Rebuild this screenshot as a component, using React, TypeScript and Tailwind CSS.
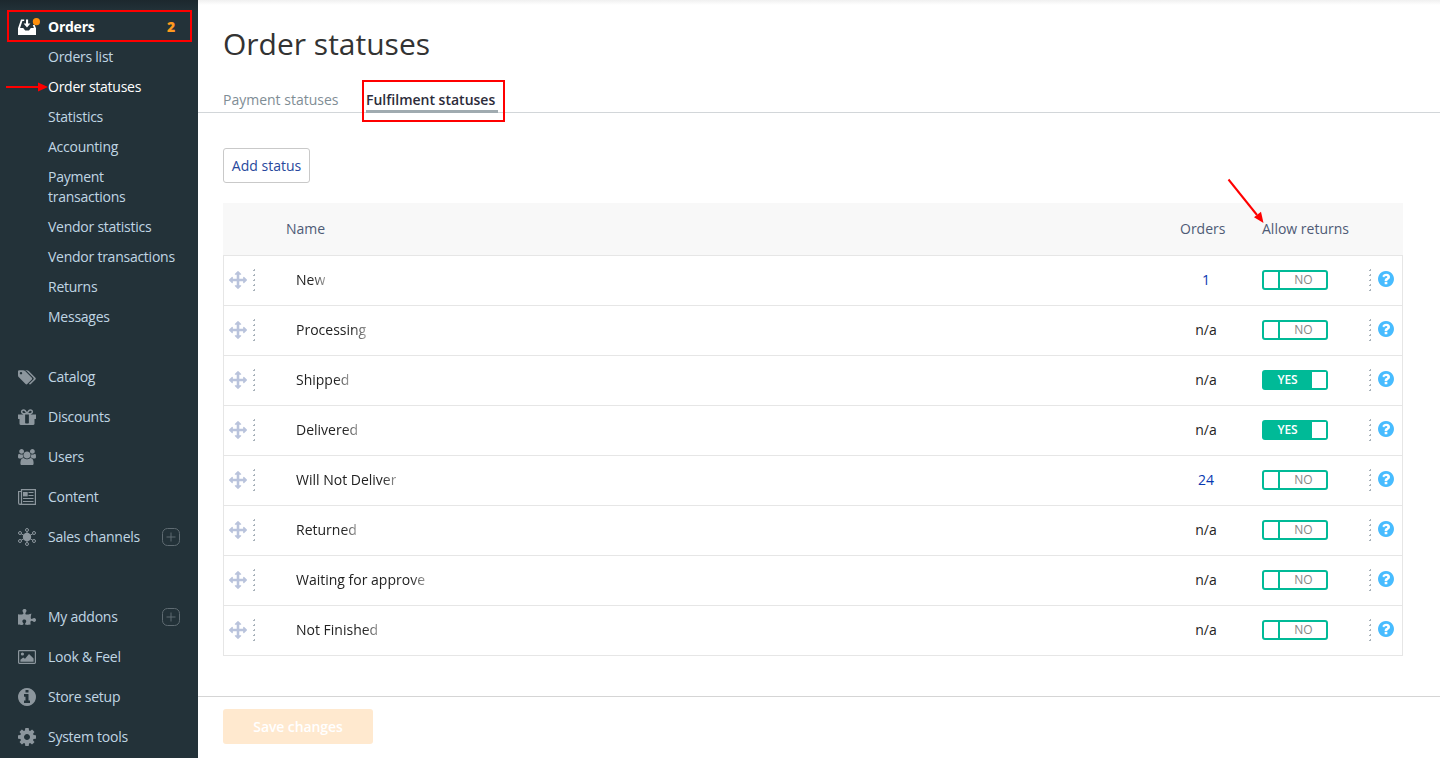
import React from "react";
import { FaPuzzlePiece } from "react-icons/fa";

type GlyphProps = { viewBox: string; w: number; h: number; d: string; className?: string };

function Glyph({ viewBox, w, h, d, className }: GlyphProps) {
  return (
    <svg width={w} height={h} viewBox={viewBox} fill="currentColor" className={className}>
      <path d={d} />
    </svg>
  );
}

const TAGS =
  "M448 448q0-53-37.5-90.5T320 320t-90.5 37.5T192 448t37.5 90.5T320 576t90.5-37.5T448 448zm1067 576q0 53-37 90l-491 492q-39 37-91 37-53 0-90-37L91 890q-38-37-64.5-101T0 672V256q0-52 38-90t90-38h416q53 0 117 26.5T763 219l715 714q37 39 37 91zm384 0q0 53-37 90l-491 492q-39 37-91 37-36 0-59-14t-53-45l470-470q37-37 37-90 0-52-37-91L923 219q-38-38-102-64.5T704 128h224q53 0 117 26.5t102 64.5l715 714q37 39 37 91z";
const GIFT =
  "M928 1356V640H608v716q0 25 18 38.5t46 13.5h192q28 0 46-13.5t18-38.5zM472 512h195L541 351q-26-31-69-31-40 0-68 28t-28 68 28 68 68 28zm688-96q0-40-28-68t-68-28q-43 0-69 31L870 512h194q40 0 68-28t28-68zm376 256v320q0 14-9 23t-23 9h-96v416q0 40-28 68t-68 28H224q-40 0-68-28t-28-68v-416H32q-14 0-23-9t-9-23V672q0-14 9-23t23-9h440q-93 0-158.5-65.5T248 416t65.5-158.5T472 192q107 0 168 77l128 165 128-165q61-77 168-77 93 0 158.5 65.5T1288 416t-65.5 158.5T1064 640h440q14 0 23 9t9 23z";
const USERS =
  "M593 896q-162 5-265 128H194q-82 0-138-40.5T0 865q0-353 124-353 6 0 43.5 21t97.5 42.5T384 597q67 0 133-23-5 37-5 66 0 139 81 256zm1071 637q0 120-73 189.5t-194 69.5H523q-121 0-194-69.5T256 1533q0-53 3.5-103.5t14-109T300 1212t43-97.5 62-81 85.5-53.5T602 960q10 0 43 21.5t73 48 107 48 135 21.5 135-21.5 107-48 73-48 43-21.5q61 0 111.5 20t85.5 53.5 62 81 43 97.5 26.5 108.5 14 109 3.5 103.5zM640 256q0 106-75 181t-181 75-181-75-75-181 75-181T384 0t181 75 75 181zm704 384q0 159-112.5 271.5T960 1024 688.5 911.5 576 640t112.5-271.5T960 256t271.5 112.5T1344 640zm576 225q0 78-56 118.5t-138 40.5h-134q-103-123-265-128 81-117 81-256 0-29-5-66 66 23 133 23 59 0 119-21.5t97.5-42.5 43.5-21q124 0 124 353zm-128-609q0 106-75 181t-181 75-181-75-75-181 75-181 181-75 181 75 75 181z";
const INFO =
  "M1024 1376v-160q0-14-9-23t-23-9h-96V672q0-14-9-23t-23-9H544q-14 0-23 9t-9 23v160q0 14 9 23t23 9h96v320h-96q-14 0-23 9t-9 23v160q0 14 9 23t23 9h448q14 0 23-9t9-23zM896 480V320q0-14-9-23t-23-9H672q-14 0-23 9t-9 23v160q0 14 9 23t23 9h192q14 0 23-9t9-23zm640 416q0 209-103 385.5T1153.5 1561 768 1664 382.5 1561 103 1281.5 0 896t103-385.5T382.5 231 768 128t385.5 103T1433 510.5 1536 896z";
const COG =
  "M1024 896q0-106-75-181t-181-75-181 75-75 181 75 181 181 75 181-75 75-181zm512-109v222q0 12-8 23t-20 13l-185 28q-19 54-39 91 35 50 107 138 10 12 10 25t-9 23q-27 37-99 108t-94 71q-12 0-26-9l-138-108q-44 23-91 38-16 136-29 186-7 28-36 28H657q-14 0-24.5-8.5T621 1634l-28-184q-49-16-90-37l-141 107q-10 9-25 9-14 0-25-11-126-114-165-168-7-10-7-23 0-12 8-23 15-21 51-66.5t54-70.5q-27-50-41-99L29 1041q-13-2-21-12.5T0 1005V783q0-12 8-23t19-13l186-28q14-46 39-92-40-57-107-138-10-12-10-24 0-10 9-23 26-36 98.5-107.5T337 263q13 0 26 10l138 107q44-23 91-38 16-136 29-186 7-28 36-28h222q14 0 24.5 8.5T915 158l28 184q49 16 90 37l142-107q9-9 24-9 13 0 25 10 129 119 165 170 7 8 7 22 0 12-8 23-15 21-51 66.5t-54 70.5q26 50 41 98l183 28q13 2 21 12.5t8 23.5z";
const ARROWS =
  "M1792 896q0 26-19 45l-256 256q-19 19-45 19t-45-19-19-45v-128h-384v384h128q26 0 45 19t19 45-19 45l-256 256q-19 19-45 19t-45-19l-256-256q-19-19-19-45t19-45 45-19h128v-384H384v128q0 26-19 45t-45 19-45-19L19 941Q0 922 0 896t19-45l256-256q19-19 45-19t45 19 19 45v128h384V384H640q-26 0-45-19t-19-45 19-45L851 19q19-19 45-19t45 19l256 256q19 19 19 45t-19 45-45 19h-128v384h384V640q0-26 19-45t45-19 45 19l256 256q19 19 19 45z";
const QUESTION =
  "M896 1376v-192q0-14-9-23t-23-9H672q-14 0-23 9t-9 23v192q0 14 9 23t23 9h192q14 0 23-9t9-23zm256-672q0-88-55.5-163T958 425t-170-41q-243 0-371 213-15 24 8 42l132 100q7 6 19 6 16 0 25-12 53-68 86-92 34-24 86-24 48 0 85.5 26t37.5 59q0 38-20 61t-68 45q-63 28-115.5 86.5T640 1020v36q0 14 9 23t23 9h192q14 0 23-9t9-23q0-19 21.5-49.5T972 957q32-18 49-28.5t46-35 44.5-48 28-60.5 12.5-81zm384 192q0 209-103 385.5T1153.5 1561 768 1664 382.5 1561 103 1281.5 0 896t103-385.5T382.5 231 768 128t385.5 103T1433 510.5 1536 896z";

function InboxIcon() {
  return (
    <svg width="22" height="18" viewBox="0 0 22 18" fill="#fff">
      <path d="M0 10H5.2L7.2 12.6H11L12.8 10H18V17H0Z" />
      <path d="M0 10.2 3 1.4H6.2V3H4.4L2 10.2ZM18 10.2 16.6 7H14.8L16 10.2Z" />
      <path d="M8 1.5H10.1V5.6H12.4L9 9.4 5.6 5.6H8Z" />
      <circle cx="18.4" cy="3.7" r="3.6" fill="#ff8f0a" />
    </svg>
  );
}

function NewsIcon() {
  return (
    <svg width="18" height="16" viewBox="0 0 18 16" fill="none" stroke="currentColor">
      <path d="M3.5 13.5V.6H17.4V15.4H2A1.4 1.4 0 0 1 .6 14V2.5H3.5M3.5 13.5A1.5 1.5 0 0 1 2 15.3" strokeWidth="1.2" />
      <path d="M10.5 3.5H15.5M10.5 6.5H15.5M5 9.5H15.5M5 12.5H15.5" />
      <path d="M5 3H9.7V7.4H5Z" fill="currentColor" stroke="none" />
    </svg>
  );
}

function HubIcon() {
  return (
    <svg width="18" height="18" viewBox="0 0 18 18" fill="none" stroke="currentColor" strokeWidth="1">
      <circle cx="9" cy="9" r="4.2" fill="currentColor" stroke="none" />
      <path d="M9 3.5V14.5M3.2 5.8 14.8 12.2M14.8 5.8 3.2 12.2" />
      <circle cx="9" cy="2" r="1.5" />
      <circle cx="9" cy="16" r="1.5" />
      <circle cx="2" cy="5" r="1.5" />
      <circle cx="16" cy="5" r="1.5" />
      <circle cx="2" cy="13" r="1.5" />
      <circle cx="16" cy="13" r="1.5" />
    </svg>
  );
}

function PictureIcon() {
  return (
    <svg width="18" height="14" viewBox="0 0 18 14">
      <rect x=".6" y=".6" width="16.8" height="12.8" rx=".8" fill="none" stroke="currentColor" strokeWidth="1.2" />
      <circle cx="4.4" cy="4" r="1.6" fill="currentColor" />
      <path d="M2.4 11.8V9.8L5.2 7.4 7 8.8 11 4 15.6 8.4V11.8Z" fill="currentColor" />
    </svg>
  );
}

const subItems = ["Orders list", "Order statuses", "Statistics", "Accounting", "Payment transactions", "Vendor statistics", "Vendor transactions", "Returns", "Messages"];

type Item = { label: string; icon: React.ReactNode; plus?: boolean };

const mainItems: Item[] = [
  { label: "Catalog", icon: <Glyph viewBox="0 0 1920 1792" w={18} h={16.8} d={TAGS} /> },
  { label: "Discounts", icon: <Glyph viewBox="0 192 1536 1344" w={18} h={16} d={GIFT} /> },
  { label: "Users", icon: <Glyph viewBox="0 0 1920 1792" w={18} h={16.8} d={USERS} /> },
  { label: "Content", icon: <NewsIcon /> },
  { label: "Sales channels", icon: <HubIcon />, plus: true },
];

const toolItems: Item[] = [
  { label: "My addons", icon: <FaPuzzlePiece size={18} />, plus: true },
  { label: "Look & Feel", icon: <PictureIcon /> },
  { label: "Store setup", icon: <Glyph viewBox="0 128 1536 1536" w={18} h={18} d={INFO} /> },
  { label: "System tools", icon: <Glyph viewBox="0 128 1536 1536" w={18} h={18} d={COG} /> },
];

const rows = [
  { name: "New", orders: "1", returns: false },
  { name: "Processing", orders: "n/a", returns: false },
  { name: "Shipped", orders: "n/a", returns: true },
  { name: "Delivered", orders: "n/a", returns: true },
  { name: "Will Not Deliver", orders: "24", returns: false },
  { name: "Returned", orders: "n/a", returns: false },
  { name: "Waiting for approve", orders: "n/a", returns: false },
  { name: "Not Finished", orders: "n/a", returns: false },
];

function NavItem({ label, icon, plus }: Item) {
  return (
    <div className="flex h-10 items-center px-[18px]">
      <span className="flex w-[30px] text-[#8c969d]">{icon}</span>
      <span className="flex-1">{label}</span>
      {plus && (
        <svg width="18" height="18" viewBox="0 0 18 18" fill="none" stroke="#5f6b72">
          <rect x=".5" y=".5" width="17" height="17" rx="5" />
          <path d="M9 4.5V13.5M4.5 9H13.5" />
        </svg>
      )}
    </div>
  );
}

function Dots() {
  return (
    <svg width="2" height="22" viewBox="0 0 2 22" fill="#a9b3bb">
      {[0, 5, 10, 15, 20].map((y) => (
        <path key={y} d={`M1 ${y}H2V${y + 2}H0V${y + 1}H1Z`} />
      ))}
    </svg>
  );
}

function Toggle({ on }: { on: boolean }) {
  return on ? (
    <div className="flex h-5 w-[66px] rounded-[3px] bg-[#00ba97] p-[2px] text-[12px] leading-4 font-semibold tracking-[-0.2px] text-white">
      <span className="w-12 pr-[1px] text-center">YES</span>
      <span className="w-[14px] bg-white" />
    </div>
  ) : (
    <div className="flex h-5 w-[66px] rounded-[3px] border-2 border-[#00ba97] bg-white text-[12px] leading-4 text-[#858585]">
      <span className="w-4 border-r-2 border-[#00ba97]" />
      <span className="flex-1 pl-[1px] text-center">NO</span>
    </div>
  );
}

export default function App() {
  return (
    <div className="relative flex h-[758px] w-[1440px] overflow-hidden bg-white font-['Open_Sans',sans-serif] text-[14px] leading-5">
      <aside className="w-[198px] shrink-0 bg-[#233239] tracking-[-0.25px] text-[#c0d6e4]">
        <div className="h-3 bg-linear-to-b from-[#1c282e] to-[#233239]" />
        <div className="flex h-[30px] items-center pr-[23px] pl-[18px] font-bold text-white">
          <span className="w-[30px]"><InboxIcon /></span>
          <span className="flex-1">Orders</span>
          <span className="font-extrabold text-[#ff9a1e]">2</span>
        </div>
        <div className="flex flex-col pl-12">
          {subItems.map((s) => (
            <div key={s} className={s === "Order statuses" ? "w-[130px] py-[5px] text-white" : "w-[130px] py-[5px]"}>{s}</div>
          ))}
        </div>
        <div className="mt-[25px]">
          {mainItems.map((i) => <NavItem key={i.label} {...i} />)}
        </div>
        <div className="mt-10">
          {toolItems.map((i) => <NavItem key={i.label} {...i} />)}
        </div>
      </aside>

      <main className="flex min-w-0 flex-1 flex-col">
        <div className="h-[5px] bg-linear-to-b from-[#f0f0f0] to-white" />
        <h1 className="mt-[19px] ml-[25px] h-10 text-[30px] leading-10 text-[#333]">Order statuses</h1>
        <div className="mt-[26px] flex h-[23px] border-b border-[#d2d6d9] pl-[25px] text-[14px]">
          <span className="w-[143px] text-[#7f8d95]">Payment statuses</span>
          <span className="h-[23px] w-[132px] border-b-[3px] border-[#a0abb0] font-semibold text-[#2c2c3a]">Fulfilment statuses</span>
        </div>
        <button className="mt-[35px] ml-[25px] h-[35px] w-[87px] rounded-[3px] border border-[#c9c9c9] text-[#27489c]">Add status</button>

        <div className="mt-5 ml-[25px] w-[1180px]">
          <div className="flex h-[52px] items-center bg-[#f8f8f8] text-[#4f5b76]">
            <span className="w-[922px] pl-[63px]">Name</span>
            <span className="w-[117px] pl-[35px]">Orders</span>
            <span>Allow returns</span>
          </div>
          <div className="border-x border-b border-[#e6e6e6]">
            {rows.map((r) => (
              <div key={r.name} className="flex h-[50px] items-center border-t border-[#e6e6e6] pb-px text-[#222]">
                <span className="flex w-[72px] items-center pl-[5px]">
                  <Glyph viewBox="0 0 1792 1792" w={18} h={18} d={ARROWS} className="mr-[6px] text-[#b9c3dc]" />
                  <Dots />
                </span>
                <span className="flex w-[872px]">
                  <span className="mask-[linear-gradient(to_left,rgba(0,0,0,0.45),black_14px)]">{r.name}</span>
                </span>
                <span className={r.orders === "n/a" ? "w-[76px] text-center" : "w-[76px] text-center text-[#0838b0]"}>{r.orders}</span>
                <span className="ml-[18px] w-[107px]"><Toggle on={r.returns} /></span>
                <Dots />
                <Glyph viewBox="0 128 1536 1536" w={16} h={16} d={QUESTION} className="mb-[2px] ml-[7px] text-[#48bcff]" />
              </div>
            ))}
          </div>
        </div>
        <footer className="mt-10 h-[62px] border-t border-[#d5d5d5] pt-3 pl-[25px]">
          <button className="h-[35px] w-[150px] rounded-[3px] bg-[#ffe9cf] font-semibold tracking-[-0.1px] text-white">Save changes</button>
        </footer>
      </main>

      <div className="absolute top-[10px] left-[7px] h-8 w-[185px] border-2 border-[#f00]" />
      <div className="absolute top-[80px] left-[362px] h-[42px] w-[143px] border-2 border-[#f00]" />
      <svg className="absolute top-[82px] left-[6px]" width="42" height="10" viewBox="0 0 42 10" fill="#f00">
        <path d="M0 4H32V0.5L42 5 32 9.5V6H0Z" />
      </svg>
      <svg className="absolute top-[178px] left-[1227px]" width="38" height="46" viewBox="0 0 38 46" fill="#f00">
        <path d="M1.5 1.5 30 37" stroke="#f00" strokeWidth="2" />
        <path d="M36.5 45 27 39.2 34 33.8Z" />
      </svg>
    </div>
  );
}
